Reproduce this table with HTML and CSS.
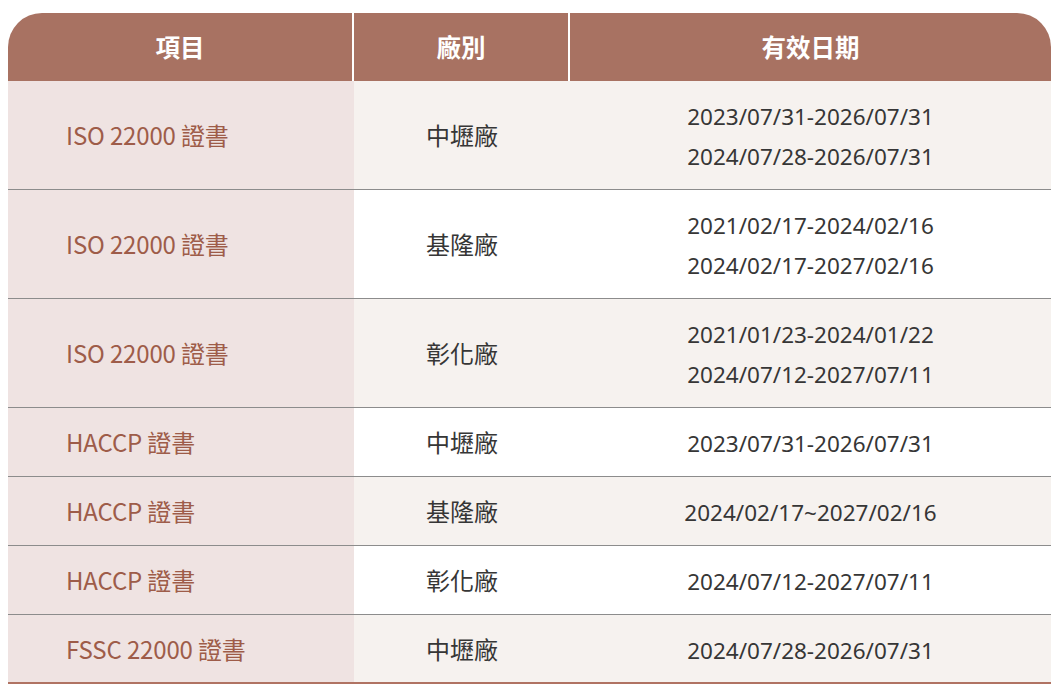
FILE: index.html
```html
<!DOCTYPE html>
<html lang="zh-Hant">
<head>
<meta charset="utf-8">
<link rel="stylesheet" href="styles.css">
</head>
<body>
<div class="wrap">
<table class="cert">
  <colgroup>
    <col class="c1"><col class="c2"><col class="c3">
  </colgroup>
  <thead>
    <tr><th>項目</th><th>廠別</th><th>有效日期</th></tr>
  </thead>
  <tbody>
    <tr class="alt"><td class="item">ISO 22000 證書</td><td>中壢廠</td><td class="date">2023/07/31-2026/07/31<br>2024/07/28-2026/07/31</td></tr>
    <tr><td class="item">ISO 22000 證書</td><td>基隆廠</td><td class="date">2021/02/17-2024/02/16<br>2024/02/17-2027/02/16</td></tr>
    <tr class="alt"><td class="item">ISO 22000 證書</td><td>彰化廠</td><td class="date">2021/01/23-2024/01/22<br>2024/07/12-2027/07/11</td></tr>
    <tr><td class="item">HACCP 證書</td><td>中壢廠</td><td class="date">2023/07/31-2026/07/31</td></tr>
    <tr class="alt"><td class="item">HACCP 證書</td><td>基隆廠</td><td class="date">2024/02/17~2027/02/16</td></tr>
    <tr><td class="item">HACCP 證書</td><td>彰化廠</td><td class="date">2024/07/12-2027/07/11</td></tr>
    <tr class="alt last"><td class="item">FSSC 22000 證書</td><td>中壢廠</td><td class="date">2024/07/28-2026/07/31</td></tr>
  </tbody>
</table>
</div>
</body>
</html>
```
FILE: styles.css
```css
html, body {
  margin: 0;
  padding: 0;
  background: #ffffff;
}
body {
  font-family: "Noto Sans CJK TC", "Noto Sans", sans-serif;
}
.wrap {
  padding: 13px 11px 0 8px;
}
.cert {
  width: 1043px;
  border-collapse: separate;
  border-spacing: 0;
  table-layout: fixed;
}
.c1 { width: 346px; }
.c2 { width: 216px; }
.c3 { width: 481px; }
.cert th {
  background: #a87262;
  color: #ffffff;
  font-size: 24.5px;
  font-weight: 700;
  height: 68px;
  padding: 0;
  line-height: 68px;
  border-right: 2px solid #ffffff;
}
.cert th:first-child {
  border-top-left-radius: 34px;
}
.cert th:last-child {
  border-right: none;
  border-top-right-radius: 34px;
}
.cert td {
  font-size: 24px;
  line-height: 40px;
  padding: 14px 0;
  text-align: center;
  color: #363636;
  background: #ffffff;
  border-bottom: 1px solid #8c8c8c;
}
.cert td.date {
  font-family: "Noto Sans", "Noto Sans CJK TC", sans-serif;
  font-size: 22.5px;
  padding-top: 16px;
  padding-bottom: 12px;
}
.cert tr.alt td {
  background: #f6f2ef;
}
.cert td.item,
.cert tr.alt td.item {
  background: #efe3e2;
  color: #9e5c49;
  font-weight: 400;
  letter-spacing: -0.15px;
  text-align: left;
  padding-left: 58px;
}
.cert tr.last td {
  border-bottom: 2px solid #b07363;
  padding-bottom: 13px;
}
.cert tr.last td.date {
  padding-bottom: 11px;
}
```
